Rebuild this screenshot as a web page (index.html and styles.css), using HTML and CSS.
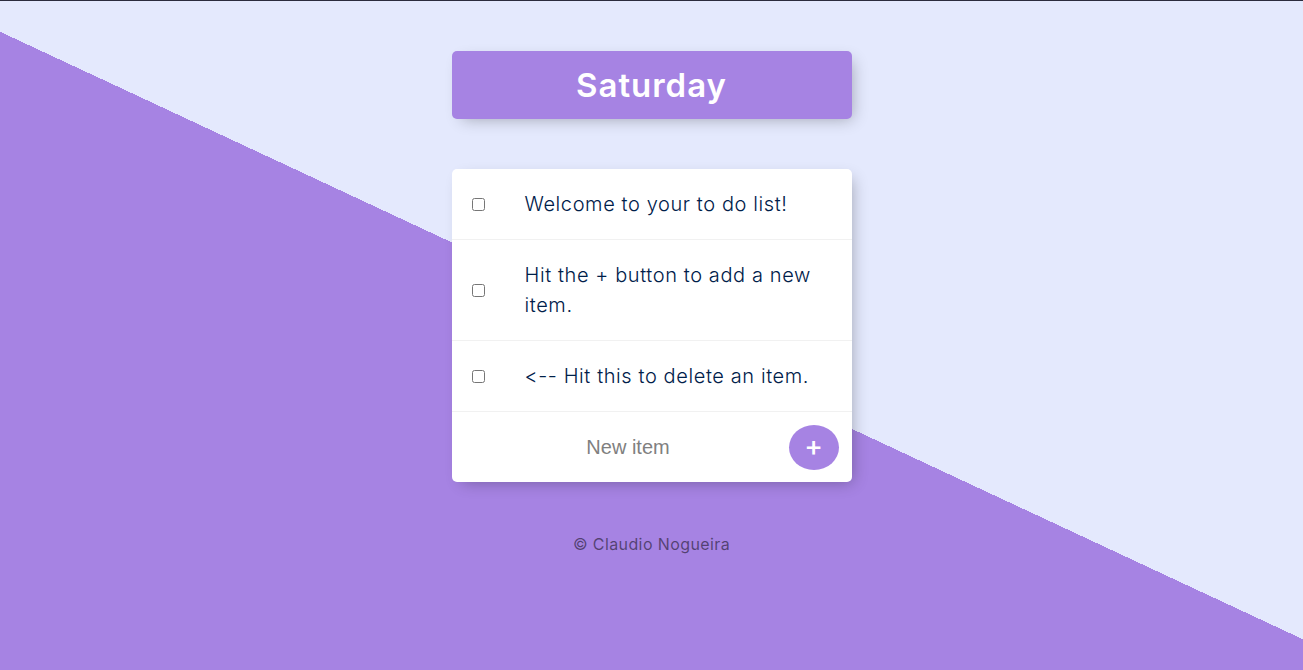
FILE: index.html
```html
<!DOCTYPE html>
<html lang="en">
<head>
<meta charset="utf-8">
<title>To Do List</title>
<link rel="stylesheet" href="styles.css">
</head>
<body>
<div class="page">
  <div class="box heading">
    <h1 class="title">Saturday</h1>
  </div>
  <div class="box list">
    <div class="item">
      <input type="checkbox" class="check">
      <p class="text">Welcome to your to do list!</p>
    </div>
    <div class="item item-tall">
      <input type="checkbox" class="check">
      <p class="text">Hit the + button to add a new item.</p>
    </div>
    <div class="item">
      <input type="checkbox" class="check">
      <p class="text">&lt;-- Hit this to delete an item.</p>
    </div>
    <form class="item add-form">
      <input type="text" class="new-item" placeholder="New item" autocomplete="off">
      <button type="button" class="add-btn">+</button>
    </form>
  </div>
  <footer class="footer">© Claudio Nogueira</footer>
</div>
</body>
</html>
```
FILE: styles.css
```css
html, body {
  margin: 0;
  padding: 0;
  height: 100%;
}
html {
  background-color: #E4E9FD;
}
body {
  font-family: Inter, "Noto Sans", sans-serif;
  font-feature-settings: "calt" 0, "liga" 0;
  font-variant-ligatures: none;
}
.page {
  min-height: 100vh;
  box-sizing: border-box;
  border-top: 1px solid #2b2b3d;
  padding-top: 50px;
  background-color: #E4E9FD;
  background-image: linear-gradient(25deg, #A683E3 50%, #E4E9FD 50%);
}
.box {
  width: 400px;
  margin: 0 auto 50px;
  background: #fff;
  border-radius: 5px;
  box-shadow: 5px 5px 15px -5px rgba(0, 0, 0, 0.3);
}
.heading {
  background-color: #A683E3;
  height: 68px;
  display: flex;
  align-items: center;
  justify-content: center;
}
.title {
  margin: 0;
  color: #fff;
  font-size: 33px;
  font-weight: 600;
  letter-spacing: 1px;
}
.item {
  min-height: 70px;
  display: flex;
  align-items: center;
  border-bottom: 1px solid #F1F1F1;
  margin: 0;
}
.item-tall {
  min-height: 100px;
}
.check {
  margin: 0 20px;
  width: 13px;
  height: 13px;
  flex: none;
}
.text {
  margin: 0;
  padding: 0 20px;
  font-size: 20px;
  font-weight: 300;
  line-height: 30px;
  letter-spacing: 0.6px;
  color: #00204a;
}
.add-form {
  border-bottom: 0;
  padding-left: 20px;
  height: 70px;
}
.new-item {
  width: 313px;
  height: 60px;
  border: none;
  padding: 0;
  text-align: center;
  font-family: "Liberation Sans", Arial, sans-serif;
  font-size: 20px;
  outline: none;
  background: transparent;
}
.new-item::placeholder {
  color: grey;
  opacity: 1;
}
.add-btn {
  width: 50px;
  height: 45px;
  margin-left: 4px;
  border-radius: 50%;
  border: 0;
  background-color: #A683E3;
  color: #fff;
  font-family: Inter, sans-serif;
  font-size: 28px;
  font-weight: 500;
  line-height: 1;
  padding: 0 0 3px;
}
.footer {
  text-align: center;
  color: rgba(0, 0, 0, 0.5);
  font-size: 16px;
  letter-spacing: 0.4px;
  line-height: 24px;
  margin-top: 3px;
}
```
